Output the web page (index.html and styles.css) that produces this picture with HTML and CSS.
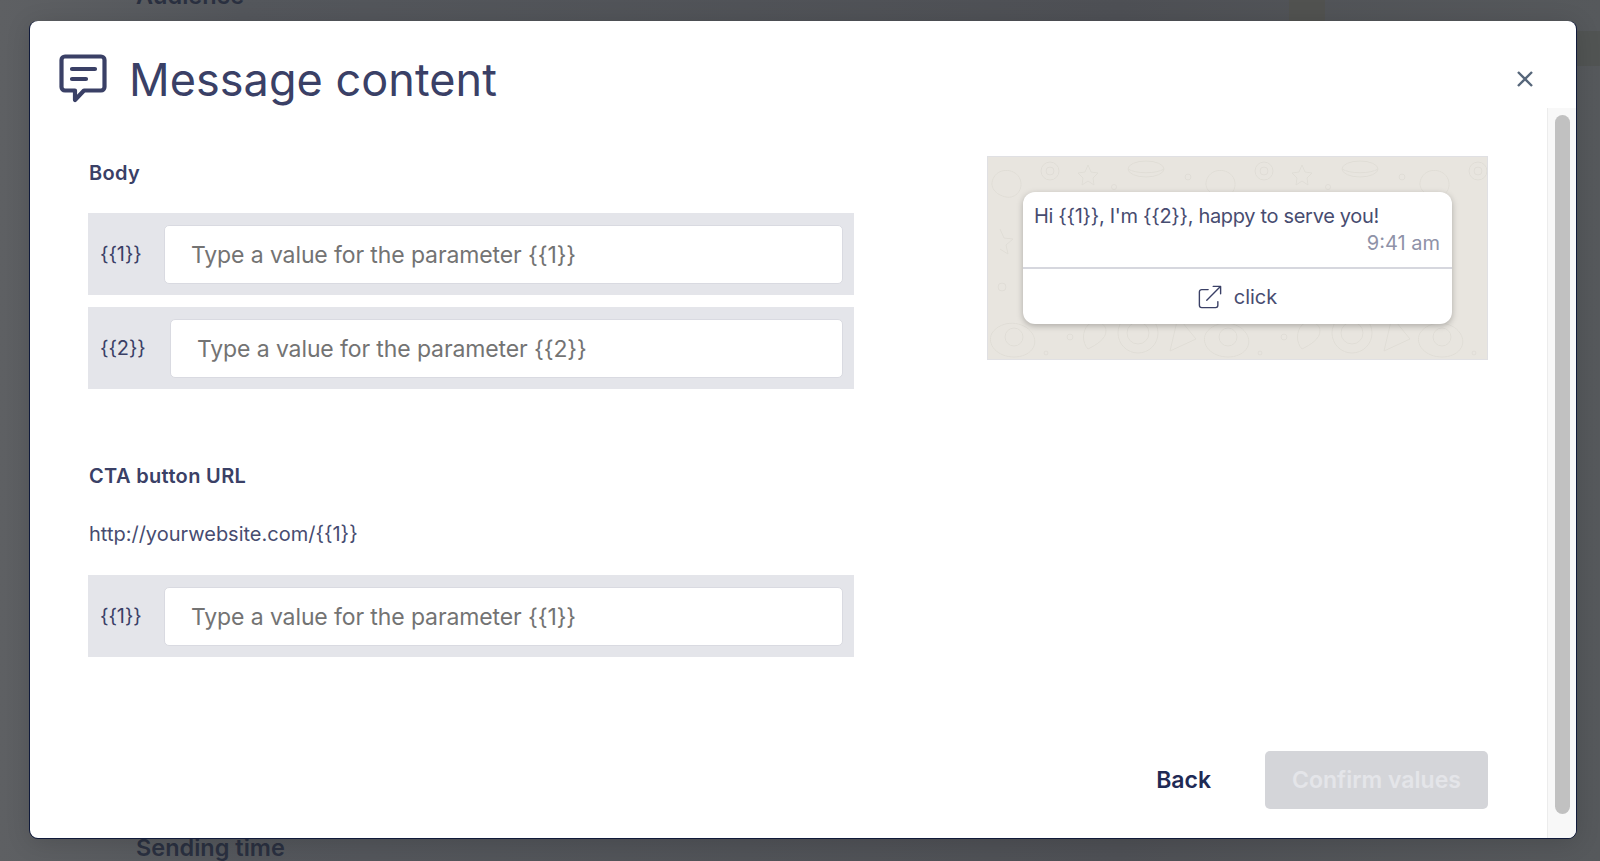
FILE: index.html
```html
<!DOCTYPE html>
<html lang="en">
<head>
  <meta charset="UTF-8">
  <meta name="viewport" content="width=device-width, initial-scale=1.0">
  <title>Message content</title>
  <link rel="stylesheet" href="styles.css">
</head>
<body>
  <!-- page behind the dialog -->
  <div class="backdrop">
    <div class="back-column"></div>
    <div class="back-band"></div>
    <h3 class="back-title back-audience">Audience</h3>
    <h3 class="back-title back-sending">Sending time</h3>
  </div>

  <div class="modal">
    <header class="modal-header">
      <svg class="header-icon" viewBox="0 0 48 50" fill="none" stroke="#3a4066" stroke-width="4.2" stroke-linejoin="round" stroke-linecap="round">
        <path d="M6 2.500h36a3.500 3.500 0 0 1 3.500 3.500v27a3.500 3.500 0 0 1-3.500 3.500H25L16 46v-9.500H6A3.500 3.500 0 0 1 2.500 33V6A3.500 3.500 0 0 1 6 2.500z"/>
        <path d="M13 15h23M13 25h14"/>
      </svg>
      <h1>Message content</h1>
      <button class="close" aria-label="Close">
        <svg viewBox="0 0 16 16" fill="none" stroke="#56667a" stroke-width="2.400">
          <path d="M1 1l14 14M15 1L1 15"/>
        </svg>
      </button>
    </header>

    <div class="modal-body">
      <div class="scroll-content">
        <div class="columns">
          <div class="form-col">
            <h2 class="section-label">Body</h2>
            <div class="param-row">
              <span class="param-name">{{1}}</span>
              <input class="param-input" type="text" placeholder="Type a value for the parameter {{1}}">
            </div>
            <div class="param-row wide-name">
              <span class="param-name">{{2}}</span>
              <input class="param-input" type="text" placeholder="Type a value for the parameter {{2}}">
            </div>

            <h2 class="section-label cta-label">CTA button URL</h2>
            <p class="url">http://yourwebsite.com/{{1}}</p>
            <div class="param-row">
              <span class="param-name">{{1}}</span>
              <input class="param-input" type="text" placeholder="Type a value for the parameter {{1}}">
            </div>
          </div>

          <div class="preview">
            <svg class="doodles" width="499" height="202" fill="none" stroke="#e0ddd6" stroke-width="1">
              <defs>
                <pattern id="doodle" width="214" height="202" patternUnits="userSpaceOnUse">
                  <path d="M6 20c6-10 22-8 26 2s-4 20-14 18S0 30 6 20z"/>
                  <circle cx="62" cy="14" r="9"/>
                  <circle cx="62" cy="14" r="4"/>
                  <path d="M100 8l3 7 7 1-5 5 1 7-6-4-6 4 1-7-5-5 7-1z"/>
                  <ellipse cx="158" cy="12" rx="18" ry="8"/>
                  <path d="M140 12c8 5 28 5 36 0"/>
                  <circle cx="200" cy="20" r="3"/>
                  <circle cx="126" cy="30" r="2.500"/>
                  <path d="M12 72l4 9 9 1-7 6 2 9-8-5"/>
                  <circle cx="14" cy="130" r="4"/>
                  <path d="M4 176c10-14 32-12 40 0s-2 24-18 24-28-12-22-24z"/>
                  <circle cx="26" cy="180" r="9"/>
                  <circle cx="82" cy="180" r="3"/>
                  <path d="M100 168c8-6 18-2 18 6s-10 14-18 18c-6-6-6-18 0-24z"/>
                  <circle cx="150" cy="176" r="20"/>
                  <circle cx="150" cy="176" r="11"/>
                  <path d="M190 160l18 22-26 12z"/>
                  <circle cx="58" cy="196" r="2"/>
                </pattern>
              </defs>
              <rect width="499" height="202" fill="url(#doodle)" stroke="none"/>
            </svg>
            <div class="bubble">
              <div class="bubble-text">
                <p class="bubble-msg">Hi {{1}}, I'm {{2}}, happy to serve you!</p>
                <p class="bubble-time">9:41 am</p>
              </div>
              <div class="bubble-cta">
                <svg class="cta-icon" viewBox="0 0 26 26" fill="none" stroke="#3a4066" stroke-width="1.500" stroke-linecap="round" stroke-linejoin="round">
                  <path d="M11 5H4a2.500 2.500 0 0 0-2.500 2.500V22A2.500 2.500 0 0 0 4 24.500h15a2.500 2.500 0 0 0 2.500-2.500v-4"/>
                  <path d="M9.500 16.500L24 2M16.500 1.500H24.500V9.500"/>
                </svg>
                <span>click</span>
              </div>
            </div>
          </div>
        </div>

        <footer class="modal-footer">
          <button class="btn-back">Back</button>
          <button class="btn-confirm" disabled>Confirm values</button>
        </footer>
      </div>

      <div class="scrollbar"><div class="thumb"></div></div>
    </div>
  </div>
</body>
</html>
```

FILE: styles.css
```css
* {
  box-sizing: border-box;
}

html, body {
  height: 100%;
}

body {
  margin: 0;
  overflow: hidden;
  font-family: Inter, "Liberation Sans", sans-serif;
  color: #3a4066;
  background: linear-gradient(to right, #5e6063, #54575c 15%, #4e5055 70%, #56595c);
}

/* page behind */
.backdrop {
  position: absolute;
  inset: 0;
}

.back-column {
  position: absolute;
  left: 1289px;
  top: 0;
  width: 36px;
  height: 21px;
  background: #515250;
}

.back-band {
  position: absolute;
  right: 0;
  top: 31px;
  width: 24px;
  height: 35px;
  background: #515453;
}

.back-title {
  position: absolute;
  left: 136px;
  margin: 0;
  font-size: 23.500px;
  font-weight: 600;
  color: #2a3040;
}

.back-audience {
  top: -19px;
}

.back-sending {
  top: 833px;
}

/* dialog */
.modal {
  position: absolute;
  left: 30px;
  top: 21px;
  width: 1546px;
  height: 817px;
  display: flex;
  flex-direction: column;
  background: #fff;
  border-radius: 8px;
  box-shadow: -1px 0 0 #101a3a, 0 1px 0 #101a3a, 1px 0 0 #101a3a, 0 4px 24px rgba(0, 0, 0, 0.15);
  overflow: hidden;
}

.modal-header {
  height: 87px;
  flex-shrink: 0;
  display: flex;
  align-items: center;
  padding: 29px 43px 0 29px;
}

.header-icon {
  width: 48px;
  height: 50px;
  margin-right: 22px;
}

.modal-header h1 {
  flex: 1;
  margin: 0;
  font-size: 45px;
  font-weight: 400;
  letter-spacing: 0.05px;
  color: #3a4066;
}

.close {
  width: 16px;
  height: 16px;
  padding: 0;
  border: none;
  background: none;
}

.close svg {
  display: block;
}

.modal-body {
  flex: 1;
  display: flex;
  min-height: 0;
}

.scroll-content {
  flex: 1;
  display: flex;
  flex-direction: column;
  padding: 48px 59px 29px 58px;
}

.scrollbar {
  width: 29px;
  padding: 7px 6px 24px 7px;
  background: #f8f8f8;
  border-left: 1px solid #ececec;
}

.thumb {
  height: 100%;
  background: #c1c1c1;
  border-radius: 8px;
}

.columns {
  display: flex;
  justify-content: space-between;
  align-items: flex-start;
}

.form-col {
  width: 766px;
  padding-top: 3px;
}

.section-label {
  margin: 0 0 26px;
  padding-left: 1px;
  font-size: 20px;
  line-height: 28px;
  font-weight: 600;
  letter-spacing: 0.35px;
  color: #3a4066;
}

.cta-label {
  margin-top: 73px;
  margin-bottom: 0;
}

.url {
  margin: 30px 0 27px;
  padding-left: 1px;
  font-size: 20px;
  line-height: 28px;
  color: #474c70;
}

.param-row {
  display: flex;
  align-items: center;
  height: 82px;
  padding: 0 11px 0 12px;
  margin-bottom: 12px;
  background: #e4e5ea;
}

.param-name {
  width: 64px;
  font-size: 20px;
  letter-spacing: -0.1px;
  color: #3a4066;
}

.wide-name .param-name {
  width: 70px;
}

.param-input {
  flex: 1;
  height: 59px;
  padding: 2px 26px 0;
  border: 1px solid #d9dae1;
  border-radius: 5px;
  background: #fff;
  font-family: inherit;
  font-size: 23px;
  letter-spacing: -0.11px;
  color: #3a4066;
}

.param-input::placeholder {
  color: #737373;
  opacity: 1;
}

/* whatsapp preview */
.preview {
  position: relative;
  width: 501px;
  height: 204px;
  padding: 35px 35px;
  background: #e8e5df;
  border: 1px solid #e0e0e3;
}

.doodles {
  position: absolute;
  left: 0;
  top: 0;
}

.bubble {
  position: relative;
  background: #fff;
  border-radius: 12px;
  box-shadow: 0 2px 6px rgba(0, 0, 0, 0.25);
}

.bubble-text {
  height: 77px;
  padding: 11px 12px 0 11px;
  border-bottom: 2px solid #d6d7de;
}

.bubble-msg {
  margin: 0;
  font-size: 20px;
  line-height: 26px;
  letter-spacing: -0.32px;
  color: #474c70;
}

.bubble-time {
  margin: 1px 0 0;
  font-size: 20px;
  line-height: 26px;
  text-align: right;
  color: #8f92a8;
}

.bubble-cta {
  height: 55px;
  display: flex;
  align-items: center;
  justify-content: center;
  gap: 12px;
  font-size: 20px;
  color: #474c70;
}

.cta-icon {
  width: 24px;
  height: 24px;
}

.modal-footer {
  margin-top: auto;
  display: flex;
  justify-content: flex-end;
  align-items: center;
  gap: 54px;
}

.btn-back {
  padding: 0;
  border: none;
  background: none;
  font-family: inherit;
  font-size: 23px;
  font-weight: 600;
  color: #1f2a55;
}

.btn-confirm {
  width: 223px;
  height: 58px;
  border: none;
  border-radius: 5px;
  background: #d4d5d9;
  font-family: inherit;
  font-size: 23px;
  font-weight: 600;
  color: #e4e5e9;
}
```
